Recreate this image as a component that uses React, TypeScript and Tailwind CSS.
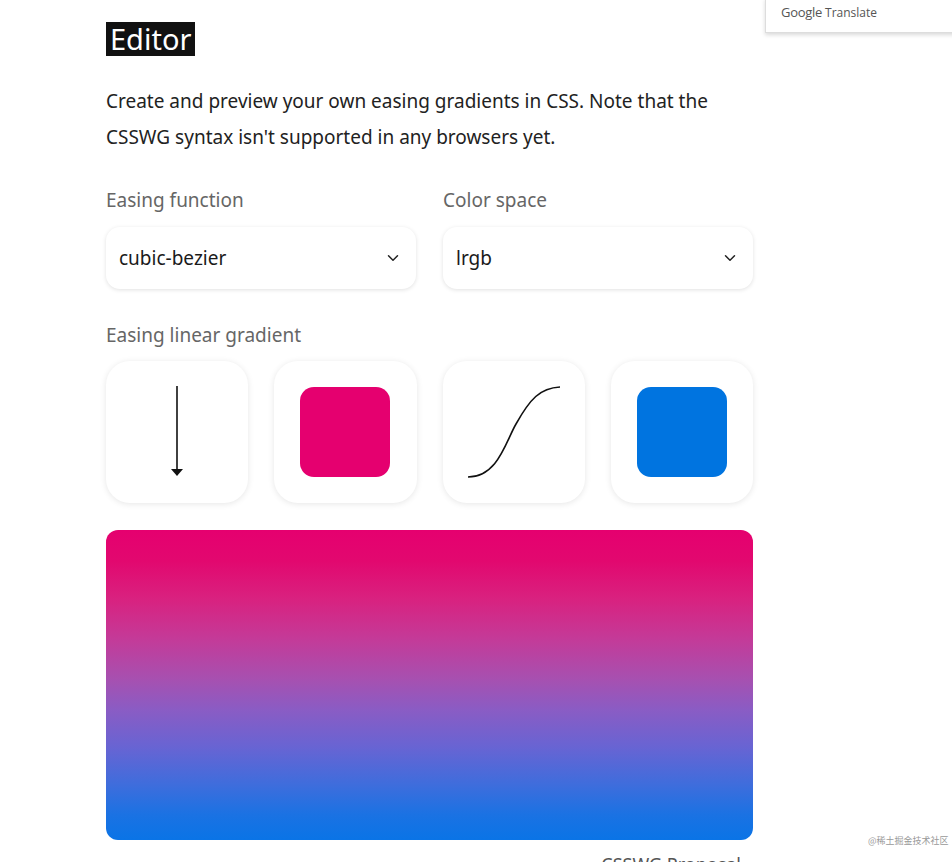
import { ChevronDown } from "lucide-react";

const font = { fontFamily: '"Noto Sans", sans-serif' };

function Select({ label, value }: { label: string; value: string }) {
  return (
    <div className="flex flex-col">
      <span className="text-[19px] text-[#666] leading-[24px] mb-[15px]">{label}</span>
      <div className="h-[62px] rounded-[14px] bg-white shadow-[0_1px_4px_rgba(0,0,0,0.12)] flex items-center justify-between pl-[13px] pr-[14px]">
        <span className="text-[19px] text-[#1a1a1a]">{value}</span>
        <ChevronDown size={18} strokeWidth={2} className="text-[#222]" />
      </div>
    </div>
  );
}

function Card({ children }: { children: React.ReactNode }) {
  return (
    <div className="h-[142px] rounded-[24px] bg-white shadow-[0_1px_6px_rgba(0,0,0,0.1)] flex items-center justify-center">
      {children}
    </div>
  );
}

export default function App() {
  return (
    <div className="relative h-[862px] bg-white overflow-hidden" style={font}>
      {/* google translate popup */}
      <div className="absolute left-[765px] top-[-2px] w-[200px] h-[35px] bg-white border border-[#ddd] shadow-[0_2px_4px_rgba(0,0,0,0.15)] pl-[15px]">
        <span className="text-[12px] leading-[19px] text-[#555]" style={{ fontFamily: '"Open Sans", sans-serif' }}>
          <span className="text-[13px] tracking-[-0.3px]">Google</span> Translate
        </span>
      </div>

      <div className="ml-[106px] w-[647px] pt-[22px]">
        <h1 className="inline-block bg-[#111] text-white text-[29px] leading-[34px] px-[4px]">Editor</h1>

        <p className="mt-[27px] text-[19px] leading-[36px] text-[#222] w-[620px]">
          Create and preview your own easing gradients in CSS. Note that the CSSWG syntax isn't supported in any browsers yet.
        </p>

        <div className="grid grid-cols-2 gap-[27px] mt-[33px]">
          <Select label="Easing function" value="cubic-bezier" />
          <Select label="Color space" value="lrgb" />
        </div>

        <div className="mt-[34px] text-[19px] text-[#666] leading-[24px]">Easing linear gradient</div>

        <div className="grid grid-cols-4 gap-[26px] mt-[14px]">
          <Card>
            <svg width="20" height="96" viewBox="0 0 20 96">
              <line x1="10" y1="2" x2="10" y2="86" stroke="#111" strokeWidth="1.6" />
              <path d="M4 85 L16 85 L10 92 Z" fill="#111" />
            </svg>
          </Card>
          <Card>
            <div className="w-[90px] h-[90px] rounded-[14px] bg-[#e5006f]" />
          </Card>
          <Card>
            <svg width="96" height="96" viewBox="0 0 96 96">
              <path d="M2 93 C 32 93, 40 57, 50 40 C 64 15, 74 4, 94 3" fill="none" stroke="#111" strokeWidth="1.6" />
            </svg>
          </Card>
          <Card>
            <div className="w-[90px] h-[90px] rounded-[14px] bg-[#0074e0]" />
          </Card>
        </div>

        <div className="mt-[27px] h-[310px] rounded-[12px] bg-[linear-gradient(to_bottom,#e5006f_0%,#e2086f_10%,#d9217f_22%,#c43a98_35%,#a750b0_48%,#8a5cc4_58%,#6864d3_70%,#3f6ddc_82%,#1a72e3_92%,#0a74e6_100%)]" />

        <div className="flex justify-end pr-[12px] mt-[12px]">
          <span className="text-[18px] leading-[24px] text-[#555]">CSSWG Proposal</span>
        </div>
      </div>

      <div className="absolute left-[868px] top-[834px] whitespace-nowrap text-[9px] text-[#999]" style={{ fontFamily: '"Noto Sans CJK SC", sans-serif' }}>
        @稀土掘金技术社区
      </div>
    </div>
  );
}
